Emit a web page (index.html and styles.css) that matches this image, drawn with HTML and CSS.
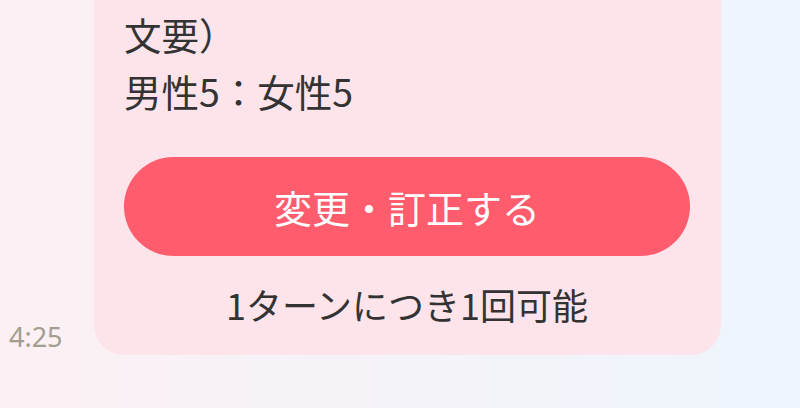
FILE: index.html
```html
<!DOCTYPE html>
<html lang="ja">
<head>
<meta charset="utf-8">
<link rel="stylesheet" href="styles.css">
</head>
<body>
<div class="chat">
  <div class="row">
    <div class="time">4:25</div>
    <div class="bubble">
      <p class="body">文要）<br>男性5：女性5</p>
      <button class="action">変更・訂正する</button>
      <p class="note">1ターンにつき1回可能</p>
    </div>
  </div>
</div>
</body>
</html>
```
FILE: styles.css
```css
html, body {
  margin: 0;
  padding: 0;
}
body {
  width: 800px;
  height: 408px;
  overflow: hidden;
  background: linear-gradient(to right, #fcf0f4 0%, #f5f3f8 45%, #eef5fd 100%);
  font-family: "Noto Sans CJK JP", "Noto Sans", sans-serif;
}
.chat {
  height: 408px;
  display: flex;
  flex-direction: column;
  justify-content: flex-end;
  padding-bottom: 53px;
  box-sizing: border-box;
  overflow: hidden;
}
.row {
  display: flex;
  align-items: flex-end;
  padding-left: 9px;
}
.time {
  width: 85px;
  font-family: "Noto Sans", sans-serif;
  font-size: 27px;
  color: #a39e8f;
  line-height: 1;
  margin-bottom: 5px;
}
.bubble {
  width: 627px;
  box-sizing: border-box;
  background: #fde4ea;
  border-radius: 30px;
  padding: 80px 31px 22px 30px;
  display: flex;
  flex-direction: column;
}
.body {
  margin: 0;
  font-size: 37.5px;
  line-height: 57px;
  color: #333333;
}
.action {
  margin-top: 38px;
  height: 99px;
  border: none;
  border-radius: 50px;
  background: #ff5c6e;
  color: #ffffff;
  font-family: "Noto Sans CJK JP", "Noto Sans", sans-serif;
  font-size: 38px;
  padding: 0;
}
.note {
  margin: 20px 0 0;
  text-align: center;
  font-size: 36px;
  line-height: 57px;
  color: #333333;
}
```
